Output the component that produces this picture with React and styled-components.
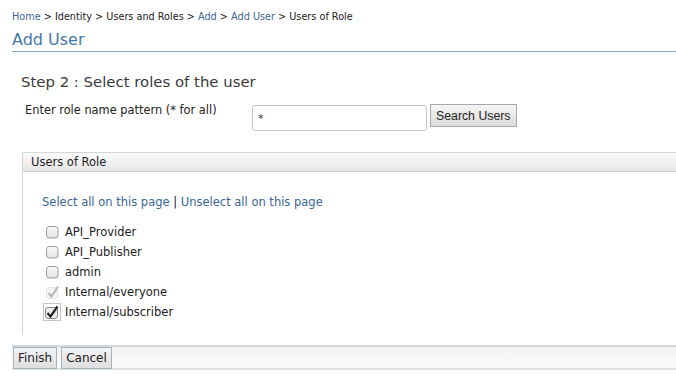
import React from 'react';
import styled, { createGlobalStyle } from 'styled-components';

const GlobalStyle = createGlobalStyle`
  html, body { margin: 0; padding: 0; background: #fff; }
  body { font-family: "DejaVu Sans", sans-serif; color: #222; }
`;

const roles = [
  { name: 'API_Provider', state: 'off' },
  { name: 'API_Publisher', state: 'off' },
  { name: 'admin', state: 'off' },
  { name: 'Internal/everyone', state: 'disabled' },
  { name: 'Internal/subscriber', state: 'focus' },
];

const Box = ({ state }) => {
  if (state === 'disabled') {
    return (
      <svg width="16" height="16" viewBox="0 0 16 16">
        <rect x="1.5" y="3.5" width="11" height="11" rx="2.5" fill="#f5f5f5" stroke="#e4e4e4" />
        <path d="M3.5 9 L6.5 12.5 L13 2.5" fill="none" stroke="#b8b8b8" strokeWidth="2" />
      </svg>
    );
  }
  if (state === 'focus') {
    return (
      <FocusSvg width="18" height="18" viewBox="0 0 18 18">
        <rect x="0.5" y="0.5" width="17" height="17" fill="none" stroke="#888" strokeDasharray="1 1" />
        <rect x="2.5" y="4.5" width="12" height="11" rx="2.5" fill="#ececec" stroke="#8a8a8a" />
        <path d="M4.5 10 L7.5 13.5 L14.5 3.5" fill="none" stroke="#222" strokeWidth="2.2" />
      </FocusSvg>
    );
  }
  return (
    <svg width="16" height="16" viewBox="0 0 16 16">
      <defs>
        <linearGradient id="cbg" x1="0" y1="0" x2="0" y2="1">
          <stop offset="0" stopColor="#fafafa" />
          <stop offset="1" stopColor="#e4e4e4" />
        </linearGradient>
      </defs>
      <rect x="1.5" y="2.5" width="11.5" height="11.5" rx="3" fill="url(#cbg)" stroke="#9a9a9a" />
    </svg>
  );
};

const App = () => (
  <Page>
    <GlobalStyle />
    <Breadcrumb>
      <a>Home</a> &gt; Identity &gt; Users and Roles &gt; <a>Add</a> &gt; <a>Add User</a> &gt; Users of Role
    </Breadcrumb>
    <Title>Add User</Title>
    <Step>Step 2 : Select roles of the user</Step>
    <SearchRow>
      <Label>Enter role name pattern (* for all)</Label>
      <Input defaultValue="*" />
      <SearchButton>Search Users</SearchButton>
    </SearchRow>
    <Panel>
      <PanelHeader>Users of Role</PanelHeader>
      <PanelBody>
        <SelectLinks>
          <a>Select all on this page</a> | <a>Unselect all on this page</a>
        </SelectLinks>
        <RoleList>
          {roles.map((r) => (
            <RoleRow key={r.name}>
              <BoxWrap>
                <Box state={r.state} />
              </BoxWrap>
              {r.name}
            </RoleRow>
          ))}
        </RoleList>
      </PanelBody>
    </Panel>
    <Footer>
      <FooterButton>Finish</FooterButton>
      <FooterButton>Cancel</FooterButton>
    </Footer>
  </Page>
);

const Page = styled.div`
  width: 676px;
  height: 392px;
  overflow: hidden;
  padding-top: 11px;
  box-sizing: border-box;
`;

const Breadcrumb = styled.div`
  margin-left: 12px;
  font-size: 9.7px;
  line-height: 12px;
  color: #222;
  a { color: #3a6595; }
`;

const Title = styled.h1`
  margin: 7px 0 0 12px;
  padding-bottom: 1px;
  font-family: "DejaVu Sans", sans-serif;
  font-weight: normal;
  font-size: 16px;
  line-height: 20px;
  color: #4577aa;
  border-bottom: 1px solid #8fa7c6;
`;

const Step = styled.h2`
  margin: 21px 0 0 21px;
  font-weight: normal;
  font-size: 14.9px;
  line-height: 18px;
  color: #3a3a3a;
`;

const SearchRow = styled.div`
  display: flex;
  align-items: flex-start;
  margin: 12px 0 0 25px;
`;

const Label = styled.div`
  width: 227px;
  font-size: 11.4px;
  line-height: 14px;
  color: #222;
`;

const Input = styled.input`
  width: 175px;
  height: 26px;
  box-sizing: border-box;
  margin-top: 2px;
  border: 1px solid #c7c7c7;
  border-radius: 3px;
  padding: 0 5px;
  font-size: 11px;
  font-family: "DejaVu Sans", sans-serif;
  color: #333;
  outline: none;
`;

const SearchButton = styled.button`
  margin: 1px 0 0 3px;
  height: 23px;
  padding: 0 5px;
  font-family: "Liberation Sans", Arial, sans-serif;
  font-size: 12.3px;
  color: #222;
  background: linear-gradient(#f6f6f6, #dcdcdc);
  border: 1px solid #a8a8a8;
  border-radius: 0;
`;

const Panel = styled.div`
  margin: 21px 0 0 22px;
  border-left: 1px solid #d4d4d4;
`;

const PanelHeader = styled.div`
  height: 20px;
  box-sizing: border-box;
  border-top: 1px solid #d6d6d6;
  border-bottom: 1px solid #d0d0d0;
  background: linear-gradient(#fbfbfb, #e6e6e6);
  font-size: 11.5px;
  line-height: 18px;
  padding-left: 8px;
  color: #222;
`;

const PanelBody = styled.div`
  padding: 23px 0 13px 19px;
`;

const SelectLinks = styled.div`
  font-size: 11.5px;
  line-height: 14px;
  color: #222;
  a { color: #3a6595; }
`;

const RoleList = styled.div`
  margin-top: 13px;
  padding-left: 3px;
`;

const RoleRow = styled.div`
  display: flex;
  align-items: center;
  height: 20px;
  font-size: 11.5px;
  color: #222;
`;

const BoxWrap = styled.span`
  display: inline-flex;
  flex: none;
  width: 20px;
`;

const FocusSvg = styled.svg`
  margin-left: -2px;
  flex: none;
`;

const Footer = styled.div`
  margin: 10px 0 0 12px;
  height: 25px;
  box-sizing: border-box;
  border-top: 2px solid #d2dadf;
  border-bottom: 2px solid #d8e0e2;
  background: linear-gradient(#f2f2f2, #fafafa);
  display: flex;
  align-items: center;
  gap: 4px;
  padding-left: 1px;
`;

const FooterButton = styled.button`
  height: 22px;
  padding: 0 4px;
  font-family: "DejaVu Sans", sans-serif;
  font-size: 12px;
  color: #222;
  background: linear-gradient(#f4f4f4, #dedede);
  border: 1px solid #a9b2b6;
  border-radius: 0;
`;

export default App;
